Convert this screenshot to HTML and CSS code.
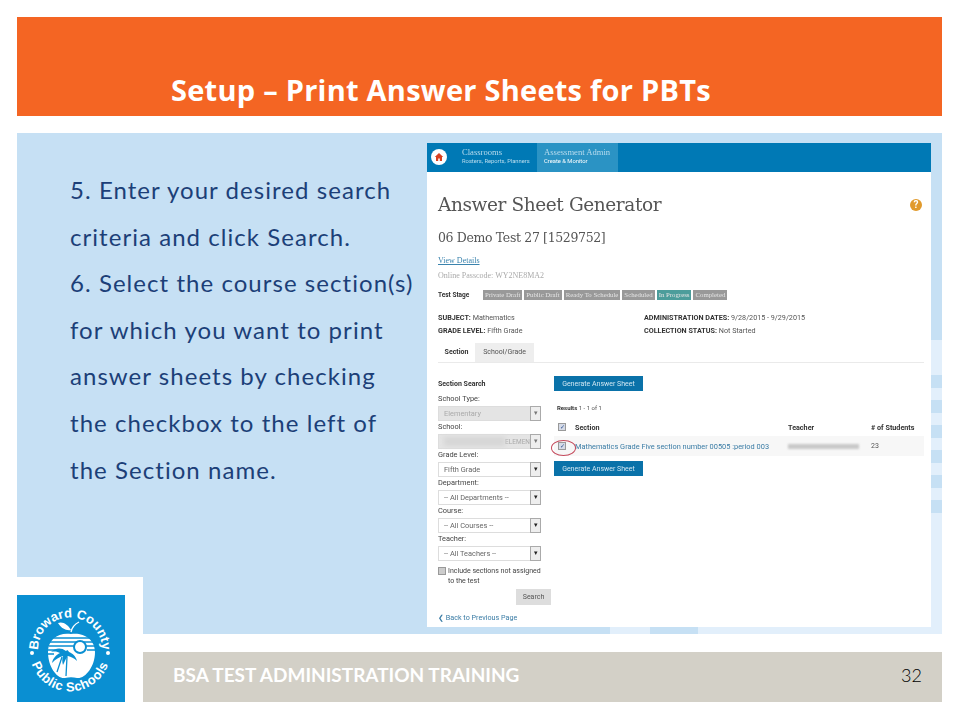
FILE: index.html
```html
<!DOCTYPE html>
<html lang="en">

<head>
    <meta charset="utf-8">
    <title>Setup - Print Answer Sheets for PBTs</title>
    <link rel="stylesheet" href="styles.css">
</head>

<body>
    <div class="slide">
        <header class="banner">
            <h1>Setup – Print Answer Sheets for PBTs</h1>
        </header>

        <section class="panel">
            <p class="steps">5. Enter your desired search<br>criteria and click Search.<br>6. Select the course section(s)<br>for which you want to print<br>answer sheets by checking<br>the checkbox to the left of<br>the Section name.</p>

            <div class="app">
                <nav class="app-nav">
                    <span class="home">
                        <svg width="10" height="10" viewBox="0 0 10 10"><path d="M5 1 0.8 5H2v4h2.2V6.4h1.6V9H8V5h1.2z" fill="#d9401f"/></svg>
                    </span>
                    <div class="nav-tab">
                        <b>Classrooms</b>
                        <small>Rosters, Reports, Planners</small>
                    </div>
                    <div class="nav-tab active">
                        <b>Assessment Admin</b>
                        <small>Create &amp; Monitor</small>
                    </div>
                </nav>

                <div class="app-body">
                    <div class="title-row">
                        <h2>Answer Sheet Generator</h2>
                        <span class="help">?</span>
                    </div>
                    <h3>06 Demo Test 27 [1529752]</h3>
                    <a class="details">View Details</a>
                    <p class="passcode">Online Passcode: WY2NE8MA2</p>

                    <div class="stages">
                        <strong>Test Stage</strong>
                        <span class="stage">Private Draft</span>
                        <span class="stage">Public Draft</span>
                        <span class="stage">Ready To Schedule</span>
                        <span class="stage">Scheduled</span>
                        <span class="stage current">In Progress</span>
                        <span class="stage">Completed</span>
                    </div>

                    <div class="facts">
                        <p><strong>SUBJECT:</strong> Mathematics<br><strong>GRADE LEVEL:</strong> Fifth Grade</p>
                        <p><strong>ADMINISTRATION DATES:</strong> 9/28/2015 - 9/29/2015<br><strong>COLLECTION STATUS:</strong> Not Started</p>
                    </div>

                    <div class="tabs">
                        <span class="tab active">Section</span>
                        <span class="tab">School/Grade</span>
                    </div>

                    <div class="columns">
                        <form class="search">
                            <strong class="search-title">Section Search</strong>
                            <label>School Type:</label>
                            <div class="select off"><span>Elementary</span><i>▾</i></div>
                            <label>School:</label>
                            <div class="select off"><span class="smudge"></span><span class="elem">ELEMEN</span><i>▾</i></div>
                            <label>Grade Level:</label>
                            <div class="select"><span>Fifth Grade</span><i>▾</i></div>
                            <label>Department:</label>
                            <div class="select"><span>-- All Departments --</span><i>▾</i></div>
                            <label>Course:</label>
                            <div class="select"><span>-- All Courses --</span><i>▾</i></div>
                            <label>Teacher:</label>
                            <div class="select"><span>-- All Teachers --</span><i>▾</i></div>
                            <div class="include">
                                <span class="box grey"></span>
                                <span>Include sections not assigned<br>to the test</span>
                            </div>
                            <button type="button" class="search-btn">Search</button>
                        </form>

                        <div class="results">
                            <button type="button" class="generate">Generate Answer Sheet</button>
                            <p class="count"><strong>Results</strong> 1 - 1 of 1</p>
                            <div class="row head">
                                <span class="box">✓</span>
                                <strong class="c-section">Section</strong>
                                <strong class="c-teacher">Teacher</strong>
                                <strong># of Students</strong>
                            </div>
                            <div class="row item">
                                <span class="box circled">✓</span>
                                <a class="c-section">Mathematics Grade Five section number 00505 :period 003</a>
                                <span class="c-teacher"><span class="smudge-name"></span></span>
                                <span>23</span>
                            </div>
                            <button type="button" class="generate">Generate Answer Sheet</button>
                        </div>
                    </div>

                    <a class="back">❮ Back to Previous Page</a>
                </div>
            </div>
        </section>

        <div class="logo-box">
            <svg class="logo" width="108" height="107" viewBox="0 0 108 107">
                <rect width="108" height="107" fill="#0a8fd2"/>
                <defs>
                    <path id="arc-top" d="M24 68A32 32 0 1 1 82 68"/>
                    <path id="arc-bottom" d="M14 45A40.5 40.5 0 1 0 92 45"/>
                </defs>
                <text class="logo-text"><textPath href="#arc-top" startOffset="50%" text-anchor="middle">Broward County</textPath></text>
                <text class="logo-text wide"><textPath href="#arc-bottom" startOffset="50%" text-anchor="middle">Public Schools</textPath></text>
                <circle cx="15" cy="58" r="2" fill="#fff"/>
                <circle cx="91" cy="58" r="2" fill="#fff"/>
                <path d="M31 57C31 44 42 37 54 39 66 37 78 44 78 57 78 72 68 84 60 83 56 82 52 82 48 83 40 84 31 72 31 57z" fill="#fff"/>
                <path d="M36 43H73M33 47H77M32 51H78M31 55H44M70 55H79M31 59H37" stroke="#0a8fd2" stroke-width="1.6"/>
                <circle cx="63" cy="52" r="7" fill="#0a8fd2"/>
                <circle cx="63" cy="52" r="5" fill="#fff"/>
                <path d="M49 56C44 52 38 53 34 57 38 56 41 57 43 58 39 60 36 63 35 68 39 64 42 62 46 61 45 64 45 67 46 70 48 66 49 63 51 61 54 62 57 63 60 66 59 61 55 58 52 57 51 55 50 55 49 56z" fill="#0a8fd2"/>
                <path d="M45 62 40 77M50 62 49 81" stroke="#0a8fd2" stroke-width="1.3" fill="none"/>
                <path d="M41 28C46 26 51 30 54 35 49 36 44 33 41 28z" fill="#fff"/>
                <path d="M54 37C55 32 58 29 62 27" stroke="#fff" stroke-width="1.3" fill="none"/>
            </svg>
        </div>

        <footer class="footer">
            <span class="footer-title">BSA TEST ADMINISTRATION TRAINING</span>
            <span class="page-num">32</span>
        </footer>
    </div>
</body>

</html>
```

FILE: styles.css
```css
* {
    box-sizing: border-box;
}

body {
    margin: 0;
    background: #fff;
    font-family: "Roboto", sans-serif;
}

.slide {
    position: relative;
    width: 960px;
    height: 720px;
    padding: 17px 18px 0 17px;
    overflow: hidden;
}

/* top orange bar */
.banner {
    height: 99px;
    background: #f46523;
    padding: 55px 0 0 154px;
}

h1 {
    margin: 0;
    color: #fff;
    font-family: "Open Sans", sans-serif;
    font-size: 29px;
    font-weight: 700;
    line-height: 36px;
    letter-spacing: 0.25px;
    white-space: nowrap;
}

/* blue area, with the pale stripes at the right and bottom edge */
.panel {
    display: flex;
    justify-content: space-between;
    height: 501px;
    margin-top: 17px;
    padding: 10px 11px 0 53px;
    background-color: #c6e0f4;
    background-image:
        linear-gradient(90deg, transparent 593px, #e2effb 593px, #e2effb 633px, transparent 633px, transparent 681px, #e2effb 681px),
        repeating-linear-gradient(#c6e0f4 0, #c6e0f4 13px, #e2effb 13px, #e2effb 25px),
        linear-gradient(#e2effb, #e2effb);
    background-repeat: no-repeat;
    background-size: 100% 7px, 11px 150px, 11px 294px;
    background-position: 0 100%, 100% 242px, 100% 100%;
}

.steps {
    margin: 24px 0 0;
    color: #1c3f78;
    font-family: "Lato", sans-serif;
    font-size: 24px;
    line-height: 46.6px;
    letter-spacing: 1.05px;
    white-space: nowrap;
}

/* the pasted screenshot */
.app {
    width: 504px;
    height: 484px;
    background: #fff;
    color: #555;
    font-size: 7px;
    filter: blur(0.3px);
}

.app-nav {
    display: flex;
    height: 29px;
    background: #0079b5;
    color: #b8dcee;
}

.home {
    display: flex;
    align-items: center;
    justify-content: center;
    width: 16px;
    height: 16px;
    margin: 6px 15px 0 4px;
    border-radius: 50%;
    background: #fff;
}

.nav-tab {
    width: 75px;
    padding-top: 4px;
}

.nav-tab.active {
    width: 81px;
    padding-left: 7px;
    background: #2b93c4;
}

.nav-tab b {
    display: block;
    font-family: "Liberation Serif", serif;
    font-size: 8.6px;
    font-weight: 400;
    line-height: 10px;
    white-space: nowrap;
}

.nav-tab small {
    display: block;
    font-size: 5.8px;
    line-height: 8px;
    white-space: nowrap;
}

.nav-tab.active small {
    color: #fff;
}

.app-body {
    position: relative;
    padding: 0 7px 0 11px;
}

.title-row {
    display: flex;
    justify-content: space-between;
    align-items: center;
    padding: 22px 2px 0 0;
}

h2 {
    margin: 0;
    font-family: "DejaVu Serif", serif;
    font-size: 18.5px;
    font-weight: 400;
    line-height: 22px;
    letter-spacing: -0.4px;
}

.help {
    width: 12px;
    height: 12px;
    border-radius: 50%;
    background: #e19a2c;
    color: #fff;
    font-size: 10px;
    font-weight: 700;
    line-height: 12px;
    text-align: center;
}

h3 {
    margin: 14px 0 0;
    font-family: "DejaVu Serif", serif;
    font-size: 12.5px;
    font-weight: 400;
    line-height: 16px;
    letter-spacing: -0.35px;
}

.details {
    display: block;
    margin-top: 10px;
    color: #3a83ad;
    font-family: "Liberation Serif", serif;
    font-size: 8px;
    line-height: 10px;
    text-decoration: underline;
}

.passcode {
    margin: 5px 0 0;
    color: #aaa;
    font-family: "Liberation Serif", serif;
    font-size: 8px;
    line-height: 10px;
}

.stages {
    display: flex;
    align-items: center;
    gap: 2px;
    margin-top: 9px;
    height: 10px;
    white-space: nowrap;
}

.stages strong {
    width: 43px;
    color: #333;
    font-size: 6.5px;
}

.stage {
    padding: 0 2px;
    background: #999;
    color: #e4e4e4;
    font-family: "Liberation Serif", serif;
    font-size: 6.8px;
    line-height: 10px;
}

.stage.current {
    background: #4c9d9b;
}

.facts {
    display: flex;
    margin-top: 11px;
    font-size: 7.2px;
    line-height: 13px;
}

.facts p {
    width: 206px;
    margin: 0;
    white-space: nowrap;
}

.facts strong {
    color: #333;
}

.tabs {
    display: flex;
    margin-top: 6px;
    height: 20px;
    border-bottom: 1px solid #eaeaea;
}

.tab {
    width: 37px;
    background: #eee;
    font-size: 7px;
    line-height: 19px;
    text-align: center;
}

.tab:nth-child(2) {
    width: 59px;
}

.tab.active {
    background: #fff;
    color: #333;
    font-weight: 700;
}

.columns {
    display: flex;
    gap: 3px;
    margin-top: 13px;
}

.search {
    width: 113px;
    font-size: 7.4px;
    color: #444;
}

.search-title {
    display: block;
    margin-top: 3px;
    color: #333;
    font-size: 7px;
    line-height: 10px;
}

.search label {
    display: block;
    line-height: 10px;
    margin-top: 1px;
}

.search label:first-of-type {
    margin-top: 5px;
}

.select {
    display: flex;
    align-items: center;
    width: 103px;
    height: 15px;
    margin-top: 2px;
    padding-left: 5px;
    border: 1px solid #ddd;
    background: #fff;
    color: #666;
    position: relative;
}

.select.off {
    background: #e4e4e4;
    color: #aaa;
}

.select i {
    position: absolute;
    right: -1px;
    top: -1px;
    width: 11px;
    height: 15px;
    border: 1px solid #aaa;
    background: #eee;
    color: #222;
    font-size: 7px;
    font-style: normal;
    line-height: 13px;
    text-align: center;
}

.select.off i {
    color: #777;
}

.smudge {
    flex: 1;
    height: 9px;
    background: #d6d6d6;
    filter: blur(2px);
}

.elem {
    margin-right: 10px;
    font-size: 6.5px;
}

.include {
    display: flex;
    gap: 2px;
    margin-top: 5px;
    font-size: 7px;
    line-height: 10px;
    color: #444;
}

.box {
    display: inline-block;
    flex: none;
    width: 8px;
    height: 8px;
    border: 1px solid #999;
    background: #d5dae6;
    color: #2a4f8f;
    font-size: 6px;
    line-height: 6px;
    text-align: center;
}

.box.grey {
    margin-top: 1px;
    background: #ccc;
}

.search-btn {
    display: block;
    width: 35px;
    height: 16px;
    margin: 3px 0 0 78px;
    padding: 0;
    border: 0;
    background: #ddd;
    color: #555;
    font-family: "Roboto", sans-serif;
    font-size: 7px;
}

.generate {
    display: block;
    width: 89px;
    height: 15px;
    padding: 0;
    border: 0;
    background: #0a72a9;
    color: #cfe6f2;
    font-family: "Roboto", sans-serif;
    font-size: 7px;
}

.count {
    margin: 13px 0 0 3px;
    font-size: 6px;
    line-height: 8px;
}

.count strong {
    color: #333;
}

.row {
    display: flex;
    align-items: center;
    width: 370px;
    height: 20px;
    padding-left: 4px;
}

.row.head {
    height: 18px;
    margin-top: 6px;
    color: #333;
    font-size: 7.2px;
}

.row.item {
    background: #f7f7f7;
    margin-bottom: 5px;
}

.row .box {
    margin-right: 9px;
    position: relative;
}

/* red ring drawn over the row checkbox */
.circled::after {
    content: "";
    position: absolute;
    left: -8px;
    top: -3px;
    width: 23px;
    height: 14px;
    border: 1.5px solid #c4485a;
    border-radius: 50%;
}

.c-section {
    width: 213px;
    flex: none;
    white-space: nowrap;
}

a.c-section {
    color: #3a7ca5;
    font-size: 7.4px;
}

.c-teacher {
    width: 83px;
    flex: none;
}

.smudge-name {
    display: block;
    width: 71px;
    height: 5px;
    background: #c9c9c9;
    filter: blur(1.2px);
}

.back {
    position: absolute;
    left: 11px;
    top: 441px;
    color: #3a7ca5;
    font-size: 7.2px;
}

/* white corner cut over the panel, holds the logo */
.logo-box {
    position: absolute;
    left: 17px;
    top: 577px;
    width: 126px;
    height: 143px;
    padding-top: 18px;
    background: #fff;
}

.logo {
    display: block;
}

.logo-text {
    fill: #fff;
    font-family: "Liberation Sans", sans-serif;
    font-size: 13px;
    font-weight: 700;
}

.logo-text.wide {
    letter-spacing: 0.5px;
}

.footer {
    display: flex;
    justify-content: space-between;
    align-items: center;
    height: 50px;
    margin: 18px 0 0 126px;
    padding: 0 20px 5px 30px;
    background: #d3d0c7;
}

.footer-title {
    color: #fff;
    font-family: "Lato", sans-serif;
    font-size: 19px;
    font-weight: 700;
}

.page-num {
    color: #000;
    font-family: "Lato", sans-serif;
    font-size: 18px;
    font-weight: 300;
}
```
